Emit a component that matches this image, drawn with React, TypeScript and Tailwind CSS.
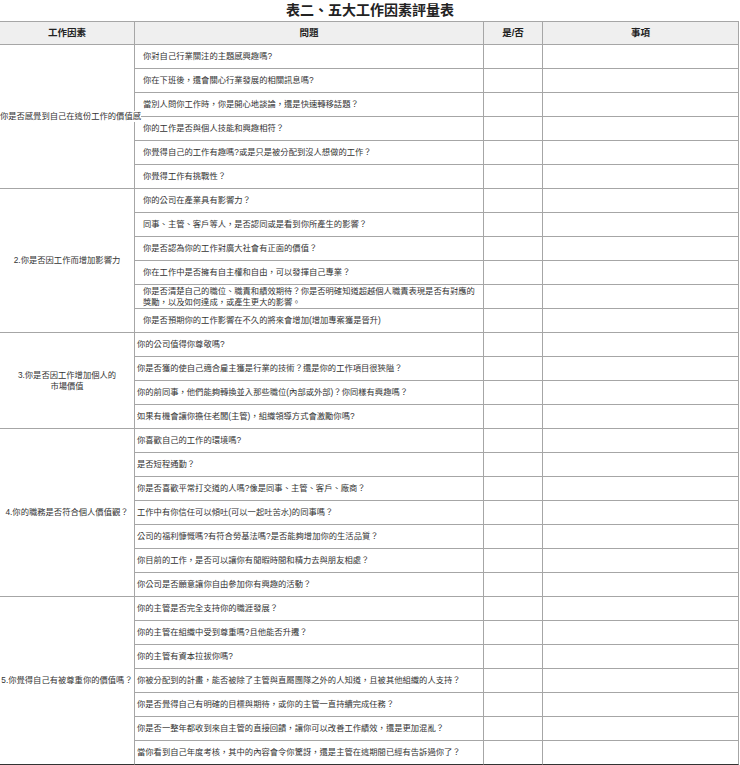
import React from "react";

type Group = {
  factor: string[];
  questions: string[][];
  pad: "wide" | "tight";
  overflow?: boolean;
};

const groups: Group[] = [
  {
    factor: ["1.你是否感覺到自己在這份工作的價值感"],
    pad: "wide",
    overflow: true,
    questions: [
      ["你對自己行業關注的主題感興趣嗎?"],
      ["你在下班後，還會關心行業發展的相關訊息嗎?"],
      ["當別人問你工作時，你是開心地談論，還是快速轉移話題？"],
      ["你的工作是否與個人技能和興趣相符？"],
      ["你覺得自己的工作有趣嗎?或是只是被分配到沒人想做的工作？"],
      ["你覺得工作有挑戰性？"],
    ],
  },
  {
    factor: ["2.你是否因工作而增加影響力"],
    pad: "wide",
    questions: [
      ["你的公司在產業具有影響力？"],
      ["同事、主管、客戶等人，是否認同或是看到你所產生的影響？"],
      ["你是否認為你的工作對廣大社會有正面的價值？"],
      ["你在工作中是否擁有自主權和自由，可以發揮自己專業？"],
      [
        "你是否清楚自己的職位、職責和績效期待？你是否明確知道超越個人職責表現是否有對應的",
        "獎勵，以及如何達成，或產生更大的影響。",
      ],
      ["你是否預期你的工作影響在不久的將來會增加(增加專案獲是晉升)"],
    ],
  },
  {
    factor: ["3.你是否因工作增加個人的", "市場價值"],
    pad: "tight",
    questions: [
      ["你的公司值得你尊敬嗎?"],
      ["你是否獲的使自己適合雇主獲是行業的技術？還是你的工作項目很狹隘？"],
      ["你的前同事，他們能夠轉換並入那些職位(內部或外部)？你同樣有興趣嗎？"],
      ["如果有機會讓你擔任老闆(主管)，組織領導方式會激勵你嗎?"],
    ],
  },
  {
    factor: ["4.你的職務是否符合個人價值觀？"],
    pad: "tight",
    questions: [
      ["你喜歡自己的工作的環境嗎?"],
      ["是否短程通勤？"],
      ["你是否喜歡平常打交道的人嗎?像是同事、主管、客戶、廠商？"],
      ["工作中有你信任可以傾吐(可以一起吐苦水)的同事嗎？"],
      ["公司的福利慷慨嗎?有符合勞基法嗎?是否能夠增加你的生活品質？"],
      ["你目前的工作，是否可以讓你有閒暇時間和精力去與朋友相處？"],
      ["你公司是否願意讓你自由參加你有興趣的活動？"],
    ],
  },
  {
    factor: ["5.你覺得自己有被尊重你的價值嗎？"],
    pad: "tight",
    questions: [
      ["你的主管是否完全支持你的職涯發展？"],
      ["你的主管在組織中受到尊重嗎?且他能否升遷？"],
      ["你的主管有資本拉拔你嗎?"],
      ["你被分配到的計畫，能否被除了主管與直屬團隊之外的人知道，且被其他組織的人支持？"],
      ["你是否覺得自己有明確的目標與期待，或你的主管一直持續完成任務？"],
      ["你是否一整年都收到來自主管的直接回饋，讓你可以改善工作績效，還是更加混亂？"],
      ["當你看到自己年度考核，其中的內容會令你驚訝，還是主管在這期間已經有告訴過你了？"],
    ],
  },
];

const spans: Record<number, string> = {
  4: "row-span-4",
  6: "row-span-6",
  7: "row-span-7",
};

export default function App() {
  return (
    <div className="w-[740px] h-[765px] overflow-hidden bg-white text-[#333] font-['Liberation_Sans','Noto_Sans_CJK_TC',sans-serif]">
      {/* Title */}
      <div className="h-[21px] flex items-center justify-center text-[14px] font-bold text-[#222]">
        表二、五大工作因素評量表
      </div>

      <div className="grid grid-cols-[135px_349px_59px_196px] auto-rows-[24px]">
        {/* Header */}
        {["工作因素", "問題", "是/否", "事項"].map((h) => (
          <div
            key={h}
            className="flex items-center justify-center bg-[#efefef] border-t border-b border-r border-[#a6a6a6] text-[9.5px] font-bold text-[#222]"
          >
            {h}
          </div>
        ))}

        {groups.map((g, gi) => {
          const lastGroup = gi === groups.length - 1;
          return (
            <React.Fragment key={gi}>
              <div
                className={`${spans[g.questions.length]} flex flex-col items-center justify-center border-r border-b whitespace-nowrap text-[8.3px] leading-[11px] ${
                  g.overflow ? "overflow-visible" : "overflow-hidden"
                } ${lastGroup ? "border-b-[#333] border-r-[#a6a6a6]" : "border-[#a6a6a6]"}`}
              >
                {g.factor.map((line) => (
                  <span key={line} className={g.overflow ? "relative z-10 bg-white" : ""}>
                    {line}
                  </span>
                ))}
              </div>
              {g.questions.map((q, qi) => {
                const last = lastGroup && qi === g.questions.length - 1;
                const rowBorder = last ? "border-b-[#333] border-r-[#a6a6a6]" : "border-[#a6a6a6]";
                return (
                  <React.Fragment key={qi}>
                    <div
                      className={`flex flex-col justify-center border-r border-b whitespace-nowrap text-[8.3px] leading-[10.5px] ${rowBorder} ${
                        g.pad === "wide" ? "pl-2" : "pl-[2px]"
                      }`}
                    >
                      {q.map((line) => (
                        <span key={line}>{line}</span>
                      ))}
                    </div>
                    <div className={`border-r border-b ${rowBorder}`} />
                    <div className={`border-r border-b ${rowBorder}`} />
                  </React.Fragment>
                );
              })}
            </React.Fragment>
          );
        })}
      </div>
    </div>
  );
}
